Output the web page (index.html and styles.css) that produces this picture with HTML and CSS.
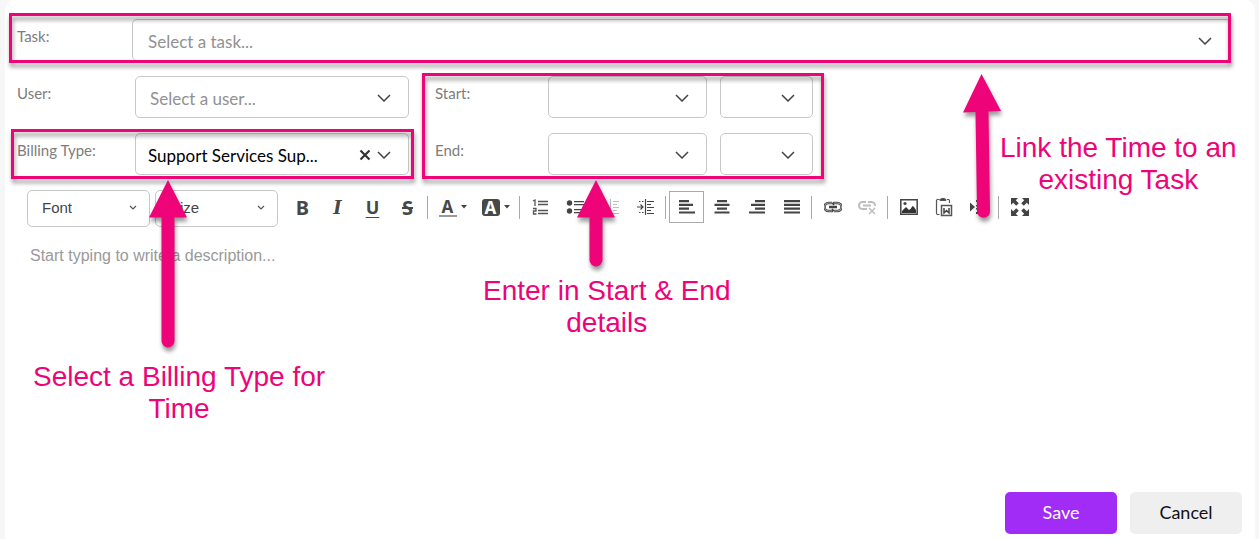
FILE: index.html
```html
<!DOCTYPE html>
<html lang="en">
<head>
<meta charset="utf-8">
<title>Time entry</title>
<link rel="stylesheet" href="styles.css">
</head>
<body>
<svg class="defs" aria-hidden="true">
  <symbol id="chevron" viewBox="0 0 14 8"><path d="M1 1l6 6 6-6" fill="none" stroke="#444" stroke-width="1.5"/></symbol>
  <symbol id="chevron-small" viewBox="0 0 8 5"><path d="M1 1l3 3 3-3" fill="none" stroke="#555" stroke-width="1.2"/></symbol>
  <symbol id="caret" viewBox="0 0 6 4"><path d="M0 0h6L3 3.5z" fill="#444"/></symbol>
</svg>
<form class="card">
  <div class="row task">
    <label class="label label-task" for="task">Task:</label>
    <div class="select grow">
      <select id="task"><option>Select a task...</option></select>
      <svg class="arrow"><use href="#chevron"/></svg>
    </div>
    <span class="highlight hl-task"></span>
  </div>

  <div class="columns">
    <div class="group people">
      <div class="row">
        <label class="label" for="user">User:</label>
        <div class="select wide">
          <select id="user" class="indent"><option>Select a user...</option></select>
          <svg class="arrow"><use href="#chevron"/></svg>
        </div>
      </div>
      <div class="row billing">
        <label class="label" for="billing">Billing Type:</label>
        <div class="select wide">
          <select id="billing" class="filled"><option>Support Services Sup...</option></select>
          <button class="clear" type="button" aria-label="Clear billing type"><svg width="12" height="12" viewBox="0 0 12 12"><path d="M1.500 1.500l9 9M10.500 1.500l-9 9" stroke="#333" stroke-width="2.200"/></svg></button>
          <svg class="arrow"><use href="#chevron"/></svg>
        </div>
        <span class="highlight hl-billing"></span>
      </div>
    </div>
    <div class="group times">
      <div class="row">
        <label class="label label-time" for="start-date">Start:</label>
        <div class="select date"><select id="start-date"></select><svg class="arrow"><use href="#chevron"/></svg></div>
        <div class="select time"><select aria-label="Start time"></select><svg class="arrow"><use href="#chevron"/></svg></div>
      </div>
      <div class="row">
        <label class="label label-time" for="end-date">End:</label>
        <div class="select date"><select id="end-date"></select><svg class="arrow"><use href="#chevron"/></svg></div>
        <div class="select time"><select aria-label="End time"></select><svg class="arrow"><use href="#chevron"/></svg></div>
      </div>
      <span class="highlight hl-times"></span>
    </div>
  </div>

  <div class="toolbar">
    <div class="picker"><select aria-label="Font"><option>Font</option></select><svg class="tick"><use href="#chevron-small"/></svg></div>
    <div class="picker"><select aria-label="Size"><option>Size</option></select><svg class="tick"><use href="#chevron-small"/></svg></div>
    <div class="tools">
      <button type="button" class="tool glyph" aria-label="Bold">B</button>
      <button type="button" class="tool glyph italic" aria-label="Italic">I</button>
      <button type="button" class="tool glyph underline" aria-label="Underline">U</button>
      <button type="button" class="tool glyph strike" aria-label="Strikethrough">S</button>
      <span class="sep"></span>
      <button type="button" class="tool drop" aria-label="Text color"><span class="ink">A</span><svg class="caret"><use href="#caret"/></svg></button>
      <button type="button" class="tool drop" aria-label="Background color"><span class="ink-box">A</span><svg class="caret"><use href="#caret"/></svg></button>
      <span class="sep"></span>
      <button type="button" class="tool" aria-label="Numbered list"><svg width="18" height="18" viewBox="0 0 18 18" fill="none" stroke="#555" stroke-width="1.300"><path d="M1 3l2-1v6M1 10.500h3v2.500H1.500v3H4.500"/><path d="M6 3.500h10M6 6.500h10M6 12.500h10M6 15.500h10"/></svg></button>
      <button type="button" class="tool" aria-label="Bulleted list"><svg width="20" height="18" viewBox="0 0 20 18" fill="#444"><circle cx="3.500" cy="5" r="2.700"/><circle cx="3.500" cy="13" r="2.700"/><path d="M8 3h10v1.300H8zM8 6h10v1.300H8zM8 11h10v1.300H8zM8 14h10v1.300H8z"/></svg></button>
      <button type="button" class="tool faded" aria-label="Decrease indent"><svg width="18" height="18" viewBox="0 0 18 18" fill="none" stroke="#444" stroke-width="1.200"><path d="M8.500 1v16M6 9H0M3 6L0 9l3 3M11 3.500h6M11 6.500h4M11 9.500h6M11 12.500h4M11 15.500h6"/></svg></button>
      <button type="button" class="tool" aria-label="Increase indent"><svg width="18" height="18" viewBox="0 0 18 18" fill="none" stroke="#444" stroke-width="1.200"><path d="M8.500 1v16"/><path d="M0 9h6M3.500 6.500L6 9l-2.500 2.500M10 3.500h7M10 6.500h4M10 9.500h7M10 12.500h4M10 15.500h7"/><path d="M2 3.500h5M2 14.500h5" stroke-dasharray="1.500 1.500"/></svg></button>
      <span class="sep"></span>
      <button type="button" class="tool active" aria-label="Align left"><svg width="16" height="16" viewBox="0 0 16 16" fill="#444"><path d="M0 1h10v2.200H0zM0 4.800h14V7H0zM0 8.600h10v2.200H0zM0 12.400h16v2.200H0z"/></svg></button>
      <button type="button" class="tool" aria-label="Align center"><svg width="16" height="16" viewBox="0 0 16 16" fill="#444"><path d="M3 1h10v2.200H3zM0.500 4.800h15V7h-15zM3 8.600h10v2.200H3zM0.500 12.400h15v2.200h-15z"/></svg></button>
      <button type="button" class="tool" aria-label="Align right"><svg width="16" height="16" viewBox="0 0 16 16" fill="#444"><path d="M6 1h10v2.200H6zM2 4.800h14V7H2zM6 8.600h10v2.200H6zM0 12.400h16v2.200H0z"/></svg></button>
      <button type="button" class="tool" aria-label="Justify"><svg width="16" height="16" viewBox="0 0 16 16" fill="#444"><path d="M0 1h16v2.200H0zM0 4.800h16V7H0zM0 8.600h16v2.200H0zM0 12.400h16v2.200H0z"/></svg></button>
      <span class="sep"></span>
      <button type="button" class="tool" aria-label="Insert link"><svg width="18" height="12" viewBox="0 0 18 12" fill="none"><path d="M8 2H4.500a3.500 3.500 0 0 0 0 8H8l1.500-1.500M10 10h3.500a3.500 3.500 0 0 0 0-8H10L8.500 3.500M5 6h8" stroke="#444" stroke-width="2.600"/><path d="M8 2H4.500a3.500 3.500 0 0 0 0 8H8M10 10h3.500a3.500 3.500 0 0 0 0-8H10" stroke="#bbb" stroke-width=".8"/></svg></button>
      <button type="button" class="tool faded" aria-label="Remove link"><svg width="19" height="16" viewBox="0 0 19 16" fill="none" stroke="#444"><path d="M8 3H4.500a3.500 3.500 0 0 0 0 7H9M10 3h3.500a3.500 3.500 0 0 1 3.500 4M5 6.500h8" stroke-width="2"/><path d="M11 9l6 6M17 9l-6 6" stroke-width="1.500"/></svg></button>
      <span class="sep"></span>
      <button type="button" class="tool" aria-label="Insert image"><svg width="18" height="16" viewBox="0 0 18 16"><path d="M.8.800h16.400v14.400H.8z" fill="none" stroke="#444" stroke-width="1.500"/><circle cx="5" cy="4.500" r="1.600" fill="#444"/><path d="M2 14v-2l4-4 3 3 1.500-1 2-3 1.500 1 2 3v3z" fill="#333"/></svg></button>
      <button type="button" class="tool" aria-label="Paste from Word"><svg width="18" height="20" viewBox="0 0 18 20" fill="none" stroke="#555"><path d="M4.500 2.500H2.500Q1.500 2.500 1.500 4v12q0 1.500 1 1.500h2M12 2.500h1.500q1 0 1 1.500v2" stroke-width="1.200"/><path d="M5 3.500V2.500Q8 0 11 2.500v1z" fill="#444"/><path d="M6.500 8.500h10v10h-10z" stroke-width="1.500"/><path d="M9 11v5l2.500-2.500L14 16v-5" stroke="#444" stroke-width="1.500"/></svg></button>
      <button type="button" class="tool" aria-label="Page break"><svg width="18" height="16" viewBox="0 0 18 16" fill="#444"><path d="M0 3.500L5 8l-5 4.500z"/><path d="M6 1h3v2H6zM6 6h3v1.500H6zM6 9h3v1.500H6zM6 13h3v2H6zM11 1h5v2h-5zM11 13h5v2h-5zM11 7h3v2h-3z"/></svg></button>
      <span class="sep"></span>
      <button type="button" class="tool" aria-label="Full screen"><svg width="18" height="18" viewBox="0 0 18 18"><path d="M0 0h7L4.800 2.200l3 3-2.600 2.600-3-3L0 7zM18 0v7l-2.200-2.200-3 3-2.600-2.600 3-3L11 0zM0 18v-7l2.200 2.200 3-3 2.600 2.600-3 3L7 18zM18 18h-7l2.200-2.200-3-3 2.600-2.600 3 3L18 11z" fill="#444"/></svg></button>
    </div>
  </div>

  <textarea class="description" aria-label="Description" placeholder="Start typing to write a description..."></textarea>

  <div class="actions">
    <button type="submit" class="btn primary">Save</button>
    <button type="button" class="btn">Cancel</button>
  </div>

  <div class="notes">
    <svg class="pointer pointer-billing" width="40" height="173" viewBox="0 0 40 173"><path d="M20 1L39 38.500H26.500V162a6.500 6.500 0 0 1-13 0V38.500H1z"/></svg>
    <svg class="pointer pointer-times" width="40" height="92" viewBox="0 0 40 92"><path d="M20 1L39 38.500H26.500V81a6.500 6.500 0 0 1-13 0V38.500H1z"/></svg>
    <svg class="pointer pointer-task" width="40" height="150" viewBox="0 0 40 150"><path d="M19.500 1L39 38L26.500 38.500L28 138a6.500 6.500 0 0 1-13 .5L13.500 39L1 39.500z"/></svg>
    <p class="note note-billing">Select a Billing Type for<br>Time</p>
    <p class="note note-times">Enter in Start &amp; End<br>details</p>
    <p class="note note-task">Link the Time to an<br>existing Task</p>
  </div>
</form>
</body>
</html>
```

FILE: styles.css
```css
* { box-sizing: border-box; }

body {
  margin: 0;
  background: #f7f7f7;
  font-family: Lato, "Liberation Sans", sans-serif;
}

.defs { position: absolute; width: 0; height: 0; }

.card {
  position: relative;
  display: flex;
  flex-direction: column;
  min-height: 100vh;
  margin: 0 4px 0 5px;
  padding: 19px 13px 5px 12px;
  background: #fff;
  border-radius: 10px 10px 0 0;
}

.row { display: flex; align-items: flex-start; }
.task { position: relative; margin-right: 11px; }
.columns { display: flex; gap: 26px; margin-top: 15px; }
.group { position: relative; display: flex; flex-direction: column; gap: 15px; }
.billing { position: relative; }
.times .row { gap: 13px; }

.label {
  width: 118px;
  padding-top: 7px;
  font-size: 15px;
  line-height: 20px;
  color: #7d7d7d;
}
.label-task { width: 115px; }
.label-time { width: 100px; }

.select { position: relative; height: 42px; }
.grow { flex: 1; }
.wide { width: 274px; }
.date { width: 159px; }
.time { width: 93px; }

select {
  appearance: none;
  width: 100%;
  height: 100%;
  border: 1px solid #c8c8c8;
  border-radius: 5px;
  background: #fff;
}

.select select {
  padding: 2px 60px 0 15px;
  font: 17px Lato, sans-serif;
  color: #919191;
}
.select .indent { padding-left: 14px; }
.select .filled { padding-right: 50px; padding-left: 12px; color: #000; }

.arrow {
  position: absolute;
  top: 18px;
  right: 18px;
  width: 14px;
  height: 8px;
  pointer-events: none;
}
.grow .arrow { right: 19px; }

.clear {
  position: absolute;
  top: 16px;
  right: 38px;
  display: flex;
  padding: 0;
  border: 0;
  background: none;
}

.highlight {
  position: absolute;
  border: 3px solid #ee0379;
  filter: drop-shadow(1px 4px 2px rgba(0, 0, 0, .4));
  pointer-events: none;
}
.hl-task { inset: -6px 0 -2px -8px; }
.hl-billing { inset: -4px -5px -4px -6px; }
.hl-times { inset: -3px -11px -4px -13px; }

.toolbar { display: flex; align-items: flex-start; gap: 5px; margin: 15px 0 0 10px; }
.picker { position: relative; width: 123px; height: 37px; }
.picker select {
  padding: 0 14px 2px;
  font: 15px "Liberation Sans", sans-serif;
  color: #444;
}
.tick { position: absolute; top: 15px; right: 13px; width: 8px; height: 5px; pointer-events: none; }
.tools { display: flex; align-items: center; height: 34px; padding-left: 2px; }

.tool {
  display: flex;
  align-items: center;
  justify-content: center;
  width: 35px;
  height: 32px;
  padding: 0;
  border: 0;
  background: none;
  color: #484848;
}
.active { border: 1px solid #aaa; }
.faded { opacity: .35; }
.glyph { font: bold 20px "Noto Sans", sans-serif; }
.italic { font-family: "DejaVu Serif", serif; font-size: 18px; font-style: italic; }
.underline { font-size: 18px; text-decoration: underline; text-decoration-thickness: 1px; text-underline-offset: 3px; }
.strike { text-decoration: line-through; text-decoration-thickness: 2px; }
.drop { width: 43px; gap: 4px; font: bold 17px/17px "Noto Sans", sans-serif; }
.ink { width: 18px; border-bottom: 2px solid #999; }
.ink-box { width: 18px; border-radius: 3px; background: #484848; color: #fff; }
.caret { width: 6px; height: 4px; }
.sep { width: 1px; height: 23px; margin: 0 3px 0 2px; background: #aaa; }

.description {
  flex: 1;
  min-height: 200px;
  margin: 19px 0 0 10px;
  padding: 0 3px;
  border: 0;
  outline: 0;
  resize: none;
  background: none;
  font: 16px/20px "Liberation Sans", sans-serif;
}
.description::placeholder { color: #999; }

.actions { display: flex; justify-content: flex-end; gap: 13px; }
.btn {
  width: 112px;
  height: 42px;
  padding: 0 0 2px;
  border: 0;
  border-radius: 5px;
  background: #efefef;
  font: 18px Lato, sans-serif;
  color: #111;
}
.primary { background: #a02cf5; color: #fff; }

.notes { position: absolute; inset: 0; pointer-events: none; }
.pointer {
  position: absolute;
  overflow: visible;
  fill: #ee0379;
  filter: drop-shadow(1px 4px 2px rgba(0, 0, 0, .4));
}
.pointer-billing { left: 143px; top: 179px; }
.pointer-times { left: 571px; top: 179px; }
.pointer-task { left: 957px; top: 73px; }
.note {
  position: absolute;
  margin: 0;
  font: 28px/32px "Liberation Sans", sans-serif;
  text-align: center;
  white-space: nowrap;
  color: #ee0379;
}
.note-billing { left: 28px; top: 361px; }
.note-times { left: 478px; top: 275px; }
.note-task { left: 995px; top: 132px; }
```
